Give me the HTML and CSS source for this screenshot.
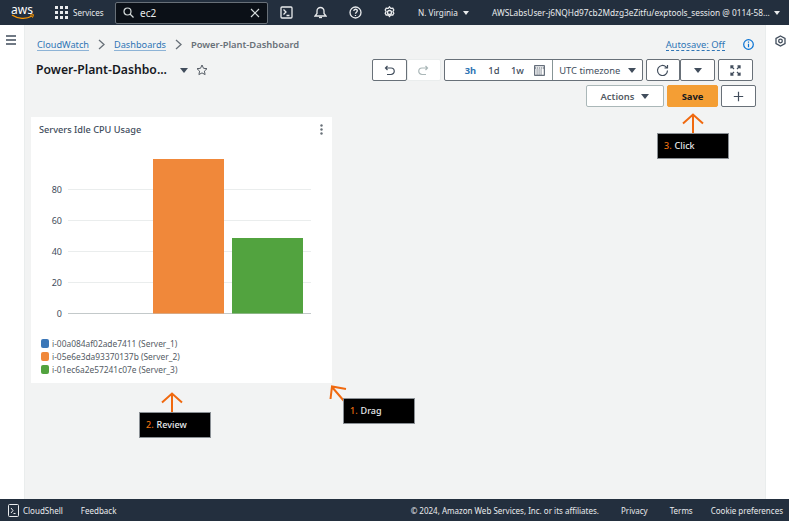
FILE: index.html
```html
<!DOCTYPE html>
<html lang="en">
<head>
<meta charset="utf-8">
<title>Power-Plant-Dashboard</title>
<link rel="stylesheet" href="styles.css">
</head>
<body>
<div class="app">
  <header class="topbar">
    <div class="logo">
      <span class="logo-text">aws</span>
      <svg class="logo-smile" width="24" height="6" viewBox="0 0 24 6"><path d="M1 1c6 4 14 4.500 20 1" fill="none" stroke="#ff9900" stroke-width="1.300"/><path d="M19 1l3.500-.3-1 3" fill="none" stroke="#ff9900" stroke-width="1"/></svg>
    </div>
    <div class="services">
      <svg width="13" height="13" viewBox="0 0 13 13" fill="#e9ebed"><rect width="3" height="3"/><rect x="5" width="3" height="3"/><rect x="10" width="3" height="3"/><rect y="5" width="3" height="3"/><rect x="5" y="5" width="3" height="3"/><rect x="10" y="5" width="3" height="3"/><rect y="10" width="3" height="3"/><rect x="5" y="10" width="3" height="3"/><rect x="10" y="10" width="3" height="3"/></svg>
      <span>Services</span>
    </div>
    <div class="search">
      <svg width="11" height="11" viewBox="0 0 11 11" fill="none" stroke="#d5dbdb" stroke-width="1.200"><circle cx="4.500" cy="4.500" r="3.500"/><path d="M7 7l3.500 3.500"/></svg>
      <span class="search-text">ec2</span>
      <svg class="search-x" width="10" height="10" viewBox="0 0 10 10" fill="none" stroke="#d5dbdb" stroke-width="1.200"><path d="M1 1l8 8M9 1l-8 8"/></svg>
    </div>
    <div class="top-icon">
      <svg width="13" height="13" viewBox="0 0 13 13" fill="none" stroke="#e9ebed" stroke-width="1.300"><rect x="1" y="1" width="11" height="11" rx="1"/><path d="M3.500 3.500L6 6 3.500 8.500M6.500 9.500h3"/></svg>
    </div>
    <div class="top-icon">
      <svg width="13" height="13" viewBox="0 0 13 13" fill="none" stroke="#e9ebed" stroke-width="1.300"><path d="M1 10h11L10 7.500V5a3.500 3.500 0 0 0-7 0v2.500z"/><path d="M5 11.500h3"/></svg>
    </div>
    <div class="top-icon">
      <svg width="13" height="13" viewBox="0 0 13 13" fill="none" stroke="#e9ebed" stroke-width="1.300"><circle cx="6.500" cy="6.500" r="5.500"/><path d="M4.800 5c0-2.300 3.500-2.300 3.500-.2 0 1.400-1.800 1.400-1.800 2.900M6.500 9v1"/></svg>
    </div>
    <div class="top-icon">
      <svg width="13" height="13" viewBox="0 0 13 13" fill="none" stroke="#e9ebed" stroke-width="1.300"><circle cx="6.500" cy="6.500" r="2"/><path d="M6.500 .8l1.300 1.600 2-.2 1 1.800-.9 1.500.9 1.700-1 1.800-2-.1-1.300 1.600-1.300-1.600-2 .1-1-1.800.9-1.700-.9-1.500 1-1.800 2 .2z"/></svg>
    </div>
    <div class="region"><span>N. Virginia</span><i class="caret caret-light"></i></div>
    <div class="account"><span>AWSLabsUser-j6NQHd97cb2Mdzg3eZitfu/exptools_session @ 0114-58...</span><i class="caret caret-light"></i></div>
  </header>

  <div class="body">
    <aside class="rail rail-left">
      <svg width="12" height="10" viewBox="0 0 12 10" stroke="#414d5c" stroke-width="1.300"><path d="M1 1h10M1 5h10M1 9h10"/></svg>
    </aside>

    <main class="content">
      <div class="crumb-row">
        <nav class="crumbs">
          <a class="crumb-link">CloudWatch</a>
          <svg class="chev" width="7" height="11" viewBox="0 0 7 11" fill="none" stroke="#687078" stroke-width="1.300"><path d="M1 1l5 4.500L1 10"/></svg>
          <a class="crumb-link">Dashboards</a>
          <svg class="chev" width="7" height="11" viewBox="0 0 7 11" fill="none" stroke="#687078" stroke-width="1.300"><path d="M1 1l5 4.500L1 10"/></svg>
          <span class="crumb-current">Power-Plant-Dashboard</span>
        </nav>
        <span class="autosave">Autosave: Off</span>
        <svg class="info" width="11" height="11" viewBox="0 0 11 11" fill="none" stroke="#0972d3" stroke-width="1.200"><circle cx="5.500" cy="5.500" r="4.800"/><path d="M5.500 4.800v3.400M5.500 2.500v1.200"/></svg>
      </div>

      <div class="head-row">
        <div class="title-wrap">
          <h1 class="title">Power-Plant-Dashbo...</h1>
          <i class="caret caret-dark title-caret"></i>
          <svg width="12" height="12" viewBox="0 0 12 12" fill="none" stroke="#545b64" stroke-width="1"><path d="M6 1l1.500 3.300 3.500.4-2.600 2.400.7 3.500L6 8.900l-3.100 1.700.7-3.500L1 4.700l3.500-.4z"/></svg>
        </div>
        <div class="toolbar">
          <div class="tool-row">
            <button class="btn btn-undo">
              <svg width="11" height="11" viewBox="0 0 11 11" fill="none" stroke="#414d5c" stroke-width="1.200"><path d="M3.500 1L1.500 3l2 2M1.500 3H7a2.700 2.700 0 0 1 0 6.500H3"/></svg>
            </button>
            <button class="btn btn-redo">
              <svg width="11" height="11" viewBox="0 0 11 11" fill="none" stroke="#aab7b8" stroke-width="1.200"><path d="M7.500 1l2 2-2 2M9.500 3H4a2.700 2.700 0 0 0 0 6.500h4"/></svg>
            </button>
            <div class="range">
              <span class="range-item range-active">3h</span>
              <span class="range-item">1d</span>
              <span class="range-item">1w</span>
              <svg class="cal" width="11" height="11" viewBox="0 0 11 11" fill="none" stroke="#414d5c" stroke-width="1"><rect x=".7" y=".7" width="9.600" height="9.600"/><path d="M.7 3h9.600M2.500 5h6M2.500 7h6M2.500 9h6" stroke-dasharray="1.200 .8"/></svg>
              <span class="zone">UTC timezone<i class="caret caret-dark"></i></span>
            </div>
            <button class="btn btn-refresh">
              <svg width="13" height="13" viewBox="0 0 13 13" fill="none" stroke="#414d5c" stroke-width="1.200"><path d="M11.500 6.500a5 5 0 1 1-1.500-3.600l1.300 1.100M11.500 1v3h-3"/></svg>
            </button>
            <button class="btn btn-drop"><i class="caret caret-dark"></i></button>
            <button class="btn btn-full">
              <svg width="11" height="11" viewBox="0 0 11 11" fill="none" stroke="#414d5c" stroke-width="1.300"><path d="M1 3.500V1h2.500M7.500 1H10v2.500M10 7.500V10H7.500M3.500 10H1V7.500M1.500 1.500l2.500 2.500M9.500 1.500L7 4M9.500 9.500L7 7M1.500 9.500L4 7"/></svg>
            </button>
          </div>
          <div class="tool-row tool-row-2">
            <button class="btn btn-actions">Actions<i class="caret caret-dark"></i></button>
            <button class="btn btn-save">Save</button>
            <button class="btn btn-plus">
              <svg width="11" height="11" viewBox="0 0 11 11" stroke="#414d5c" stroke-width="1.200"><path d="M5.500 .8v9.400M.8 5.500h9.400"/></svg>
            </button>
          </div>
        </div>
      </div>

      <section class="widget">
        <div class="widget-head">
          <h2 class="widget-title">Servers Idle CPU Usage</h2>
          <svg width="3" height="11" viewBox="0 0 3 11" fill="#687078"><circle cx="1.500" cy="1.500" r="1.200"/><circle cx="1.500" cy="5.500" r="1.200"/><circle cx="1.500" cy="9.500" r="1.200"/></svg>
        </div>
        <svg class="chart" width="301" height="180" viewBox="0 0 301 180">
          <g stroke="#eaeded" stroke-width="1">
            <path d="M37 47.500h243M37 78.500h243M37 109.500h243M37 140.500h243"/>
          </g>
          <path d="M37 171.500h243" stroke="#c3c9ca" stroke-width="1"/>
          <rect x="122" y="17" width="71" height="154.500" fill="#f0883a"/>
          <rect x="201" y="96" width="71" height="75.500" fill="#52a33f"/>
          <g class="axis">
            <text x="31" y="51" text-anchor="end">80</text>
            <text x="31" y="82" text-anchor="end">60</text>
            <text x="31" y="113" text-anchor="end">40</text>
            <text x="31" y="144" text-anchor="end">20</text>
            <text x="31" y="175" text-anchor="end">0</text>
          </g>
        </svg>
        <ul class="legend">
          <li class="legend-row"><i class="swatch swatch-blue"></i>i-00a084af02ade7411 (Server_1)</li>
          <li class="legend-row"><i class="swatch swatch-orange"></i>i-05e6e3da93370137b (Server_2)</li>
          <li class="legend-row"><i class="swatch swatch-green"></i>i-01ec6a2e57241c07e (Server_3)</li>
        </ul>
      </section>
    </main>

    <aside class="rail rail-right">
      <svg width="11" height="12" viewBox="0 0 11 12" fill="none" stroke="#414d5c" stroke-width="1.300"><path d="M5.500 1l4.500 2.500v5L5.500 11 1 8.500v-5z"/><circle cx="5.500" cy="6" r="1.800"/></svg>
    </aside>
  </div>

  <footer class="footer">
    <svg width="11" height="13" viewBox="0 0 11 13" fill="none" stroke="#e9ebed" stroke-width="1"><rect x=".5" y=".5" width="10" height="12" rx="1"/><path d="M3 4l2 2.500L3 9M5.500 9.500h2"/></svg>
    <span class="foot-shell">CloudShell</span>
    <span class="foot-feedback">Feedback</span>
    <span class="foot-copy">© 2024, Amazon Web Services, Inc. or its affiliates.</span>
    <span class="foot-link">Privacy</span>
    <span class="foot-link">Terms</span>
    <span class="foot-link">Cookie preferences</span>
  </footer>

  <svg class="arrow arrow-save" width="24" height="20" viewBox="0 0 24 20" fill="none" stroke="#f0690f" stroke-width="2"><path d="M12 20V2M2 10.500L12 1.500l10 9"/></svg>
  <div class="tip tip-save"><b>3.</b> Click</div>
  <svg class="arrow arrow-review" width="24" height="20" viewBox="0 0 24 20" fill="none" stroke="#f0690f" stroke-width="2"><path d="M12 20V2M2 10.500L12 1.500l10 9"/></svg>
  <div class="tip tip-review"><b>2.</b> Review</div>
  <svg class="arrow arrow-drag" width="20" height="20" viewBox="0 0 20 20" fill="none" stroke="#f0690f" stroke-width="2"><path d="M15 17L3 3M1.500 15L3 2.500l14 2.500"/></svg>
  <div class="tip tip-drag"><b>1.</b> Drag</div>
</div>
</body>
</html>
```
FILE: styles.css
```css
* { box-sizing: border-box; }
html, body { margin: 0; padding: 0; }
body {
  width: 789px;
  height: 521px;
  overflow: hidden;
  font-family: "Noto Sans", "Open Sans", "Liberation Sans", sans-serif;
  color: #16191f;
}
.app {
  position: relative;
  display: flex;
  flex-direction: column;
  width: 789px;
  height: 521px;
  background: #f2f3f3;
}

/* top bar */
.topbar {
  display: flex;
  align-items: center;
  flex: 0 0 25px;
  background: #232f3e;
  color: #e9ebed;
  font-size: 8px;
}
.logo {
  position: relative;
  width: 24px;
  height: 19px;
  margin-left: 10px;
  color: #fff;
}
.logo-text {
  display: block;
  font-size: 12px;
  line-height: 13px;
  text-align: center;
}
.logo-smile { position: absolute; left: 1px; top: 11px; }
.services {
  display: flex;
  align-items: center;
  gap: 5px;
  width: 60px;
  margin-left: 21px;
}
.search {
  display: flex;
  align-items: center;
  width: 153px;
  height: 22px;
  padding: 0 7px;
  background: #0b1017;
  border: 1px solid #687078;
  border-radius: 2px;
}
.search-text { margin-left: 6px; font-size: 10px; color: #eaeded; }
.search-x { margin-left: auto; }
.top-icon {
  display: flex;
  justify-content: center;
  width: 34.500px;
}
.top-icon:nth-child(4) { margin-left: 1px; }
.region {
  display: flex;
  align-items: center;
  gap: 5px;
  width: 82px;
  margin-left: 3px;
  padding-left: 8px;
  font-size: 8.200px;
  white-space: nowrap;
}
.account {
  display: flex;
  align-items: center;
  gap: 4px;
  font-size: 8.300px;
  white-space: nowrap;
}
.caret {
  display: inline-block;
  width: 0;
  height: 0;
  border-left: 4px solid transparent;
  border-right: 4px solid transparent;
  border-top: 5px solid #414d5c;
}
.caret-light { border-left-width: 3.500px; border-right-width: 3.500px; border-top: 4.500px solid #e9ebed; }
.caret-dark { border-top-color: #414d5c; }

/* body */
.body {
  display: grid;
  grid-template-columns: 25px 1fr 24px;
  flex: 1 1 auto;
  min-height: 0;
}
.rail { background: #fff; display: flex; justify-content: center; align-items: flex-start; }
.rail-left { padding: 10px 2px 0 0; border-right: 1px solid #eaeded; }
.rail-right { padding: 10px 0 0 5px; border-left: 1px solid #eaeded; }
.content { min-width: 0; padding: 0 0 0 6px; }

.crumb-row {
  display: flex;
  align-items: center;
  height: 13px;
  margin-top: 13px;
  padding-left: 6px;
  font-size: 9.400px;
}
.crumbs { display: flex; align-items: center; }
.crumb-link {
  color: #2f75b5;
  border-bottom: 1px solid #8db3d6;
  line-height: 11px;
  font-size: 9.200px;
}
.chev { margin: 0 9px; }
.crumb-current { color: #687078; font-weight: 600; }
.autosave {
  margin-left: auto;
  margin-right: 18px;
  color: #2f75b5;
  border-bottom: 1px dashed #2f75b5;
  line-height: 11px;
}
.info { margin-right: 11px; }

.head-row {
  display: flex;
  justify-content: space-between;
  align-items: flex-start;
  margin-top: 8px;
  height: 52px;
}
.title-wrap {
  display: flex;
  align-items: center;
  margin-top: 3px;
  margin-left: 5px;
  height: 16px;
}
.title {
  margin: 0 13px 0 0;
  font-size: 12.200px;
  font-weight: 600;
  line-height: 16px;
  color: #16191f;
}
.title-caret { margin-right: 8px; }
.toolbar {
  display: flex;
  flex-direction: column;
  align-items: flex-end;
  margin-right: 9px;
  gap: 4px;
}
.tool-row { display: flex; width: 381px; height: 22px; margin-right: 3px; }
.tool-row-2 { width: auto; margin-right: 0; gap: 3px; }
.btn {
  display: flex;
  align-items: center;
  justify-content: center;
  height: 22px;
  padding: 0;
  background: #fff;
  border: 1px solid #687078;
  border-radius: 2px;
  font-family: inherit;
  font-size: 9.400px;
  font-weight: 600;
  color: #545b64;
}
.btn-undo { width: 35px; }
.btn-redo { width: 34px; border-color: #eaeded; }
.range {
  display: flex;
  align-items: center;
  width: 200px;
  height: 22px;
  margin-left: 3px;
  background: #fff;
  border: 1px solid #687078;
  border-radius: 2px;
  font-size: 9.400px;
  color: #414d5c;
}
.range-item { width: 23.500px; text-align: center; font-weight: 500; }
.range-active { margin-left: 14px; color: #2f75b5; font-weight: 700; }
.cal { margin-left: 5px; }
.zone {
  display: flex;
  align-items: center;
  gap: 8px;
  height: 100%;
  margin-left: 7px;
  padding-left: 6px;
  border-left: 1px solid #879596;
  white-space: nowrap;
}
.btn-refresh { width: 35px; margin-left: 3px; }
.btn-drop { width: 35px; }
.btn-full { width: 35px; margin-left: 3px; }
.btn-actions { width: 78px; gap: 7px; border-color: #aab7b8; }
.btn-save { width: 51px; background: #f49e34; border-color: #f49e34; color: #16191f; font-weight: 700; }
.btn-plus { width: 35px; }

/* widget */
.widget {
  width: 301px;
  height: 266px;
  margin-top: 6px;
  background: #fff;
}
.widget-head {
  display: flex;
  align-items: center;
  justify-content: space-between;
  height: 25px;
  padding: 0 9px 0 8px;
}
.widget-title {
  margin: 0;
  font-size: 9.200px;
  font-weight: 500;
  color: #414d5c;
}
.chart { display: block; }
.axis text { font-size: 9px; fill: #414d5c; font-family: "Noto Sans", "Open Sans", sans-serif; }
.legend {
  list-style: none;
  margin: 15px 0 0;
  padding: 0 0 0 10px;
  font-size: 8.400px;
  color: #545b64;
}
.legend-row { display: flex; align-items: center; gap: 3px; height: 13px; white-space: nowrap; }
.swatch { width: 8px; height: 9px; border-radius: 2px; }
.swatch-blue { background: #3b77b8; }
.swatch-orange { background: #f0883a; }
.swatch-green { background: #52a33f; }

/* footer */
.footer {
  display: flex;
  align-items: center;
  flex: 0 0 22px;
  padding: 0 6px 0 8px;
  background: #232f3e;
  color: #e9ebed;
  font-size: 8px;
}
.foot-shell { margin-left: 4px; }
.foot-feedback { margin-left: 18px; }
.foot-copy { margin-left: auto; }
.foot-link { margin-left: 22px; }
.foot-link:last-child { margin-left: 18px; }

/* annotations */
.arrow { position: absolute; }
.arrow-save { left: 681px; top: 113px; }
.arrow-review { left: 160px; top: 392px; }
.arrow-drag { left: 329px; top: 384px; }
.tip {
  position: absolute;
  display: flex;
  align-items: center;
  gap: 3px;
  height: 26px;
  padding: 0 0 1px 6px;
  background: #000;
  border: 1px solid #8a8f94;
  color: #e9ebed;
  font-size: 9px;
  font-weight: 500;
}
.tip b { color: #ec7211; font-weight: 500; }
.tip-save { left: 657px; top: 133px; width: 72px; }
.tip-review { left: 139px; top: 412px; width: 72px; }
.tip-drag { left: 343px; top: 398px; width: 72px; }
```
